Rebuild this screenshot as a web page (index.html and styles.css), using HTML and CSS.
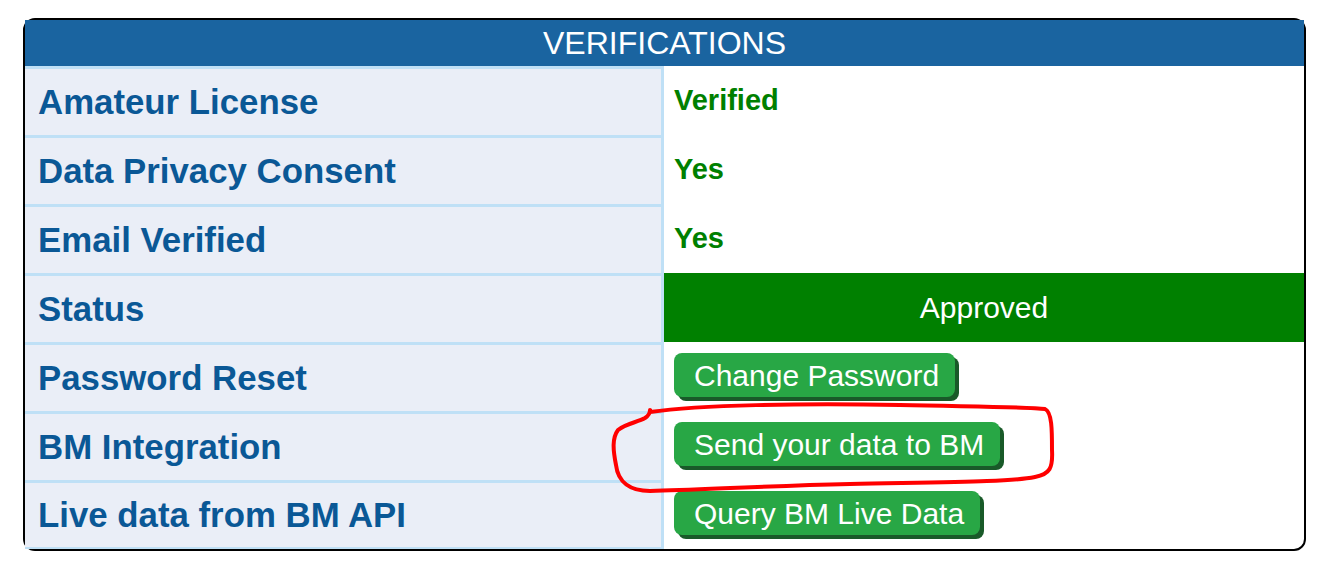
FILE: index.html
```html
<!DOCTYPE html>
<html lang="en">
<head>
<meta charset="utf-8">
<title>Verifications</title>
<link rel="stylesheet" href="styles.css">
</head>
<body>
<div class="card">
  <div class="card-header">VERIFICATIONS</div>
  <div class="grid">
    <div class="label">Amateur License</div>
    <div class="value ok">Verified</div>
    <div class="label">Data Privacy Consent</div>
    <div class="value ok">Yes</div>
    <div class="label">Email Verified</div>
    <div class="value ok">Yes</div>
    <div class="label">Status</div>
    <div class="value status">Approved</div>
    <div class="label">Password Reset</div>
    <div class="value"><button class="btn">Change Password</button></div>
    <div class="label">BM Integration</div>
    <div class="value"><button class="btn">Send your data to BM</button></div>
    <div class="label last">Live data from BM API</div>
    <div class="value"><button class="btn">Query BM Live Data</button></div>
  </div>
</div>
<svg class="scribble" width="1328" height="572" viewBox="0 0 1328 572" aria-hidden="true">
  <path d="M650,412 C700,405 800,403 900,405 S1030,407 1045,409 C1052,412 1052,430 1052,450 C1053,468 1050,474 1035,477 C1010,482 950,482 850,484 C760,486 700,490 650,491 C630,491 618,482 616,465 C613,450 612,438 618,430 C625,424 638,422 645,418 C648,416 650,413 650,410" fill="none" stroke="#ff0000" stroke-width="4" stroke-linecap="round" stroke-linejoin="round"/>
</svg>
</body>
</html>
```

FILE: styles.css
```css
html, body {
  margin: 0;
  background: #ffffff;
}

body {
  padding: 18px 22px 0 23px;
  font-family: "Liberation Sans", Arial, sans-serif;
}

.card {
  border: 2px solid #000000;
  border-radius: 12px;
  background: #ffffff;
}

.card-header {
  height: 46px;
  background: #1a64a0;
  color: #ffffff;
  font-size: 32px;
  line-height: 46px;
  text-align: center;
}

.grid {
  display: grid;
  grid-template-columns: 639px 1fr;
  grid-auto-rows: 69px;
}

.label {
  background: #eaeef7;
  border-top: 3px solid #bfe0f6;
  border-right: 3px solid #bfe0f6;
  color: #0a5896;
  font-weight: bold;
  font-size: 34.8px;
  display: flex;
  align-items: center;
  padding-left: 13px;
}

.label.last {
  border-bottom: 2px solid #bfe0f6;
}

.value {
  display: flex;
  align-items: center;
  padding-left: 10px;
  font-size: 29px;
}

.value.ok {
  color: #008000;
  font-weight: bold;
}

.value.status {
  background: #008000;
  color: #ffffff;
  justify-content: center;
  padding-left: 0;
  font-size: 30px;
}

.btn {
  font-family: "Liberation Sans", Arial, sans-serif;
  font-size: 30px;
  color: #ffffff;
  background: #28a745;
  border: none;
  border-radius: 8px;
  height: 44px;
  padding: 2px 16px 0 20px;
  margin-bottom: 4px;
  box-shadow: 4px 4px 0 #195a29;
  cursor: pointer;
}

.scribble {
  position: absolute;
  left: 0;
  top: 0;
  pointer-events: none;
}
```
